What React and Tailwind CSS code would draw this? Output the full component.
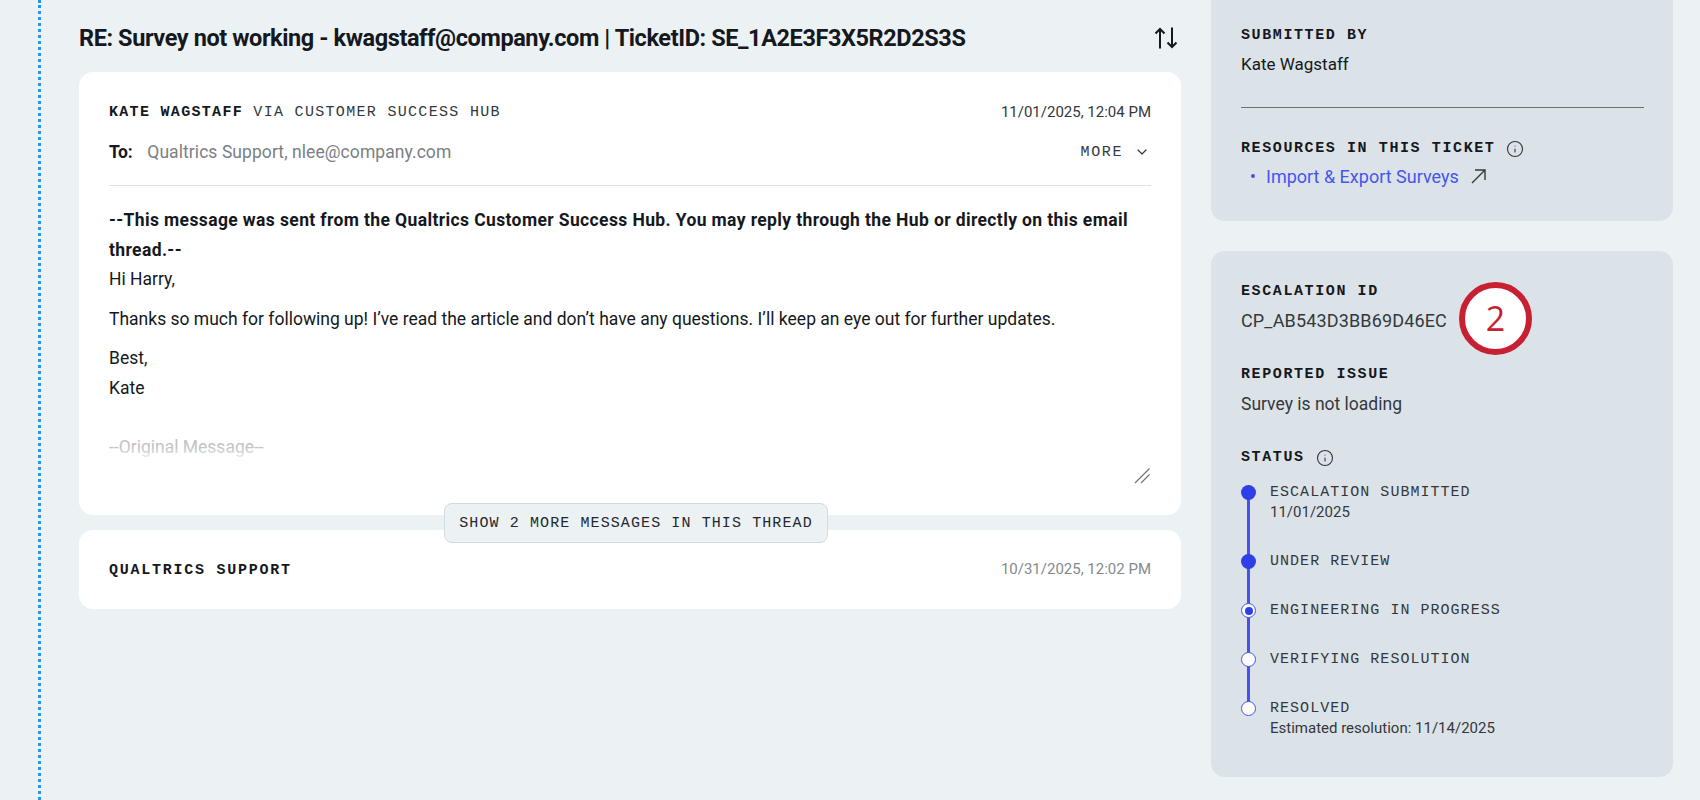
import React from "react";
import { ChevronDown, Info } from "lucide-react";

const SANS = "font-['Roboto','Liberation_Sans',sans-serif]";
const MONO = "font-['Liberation_Mono','DejaVu_Sans_Mono',monospace]";
const LABEL = `${MONO} pt-[1px] text-[15px] leading-[20px] font-bold tracking-[1.6px] text-[#15181c]`;

const STEPS = [
  { label: "ESCALATION SUBMITTED", sub: "11/01/2025", state: "done", h: "h-[69px]" },
  { label: "UNDER REVIEW", state: "done", h: "h-[49px]" },
  { label: "ENGINEERING IN PROGRESS", state: "active", h: "h-[49px]" },
  { label: "VERIFYING RESOLUTION", state: "todo", h: "h-[49px]" },
  { label: "RESOLVED", sub: "Estimated resolution: 11/14/2025", state: "todo", last: true, h: "h-[46px]" },
];

function Dot({ state }) {
  if (state === "done") {
    return <span className="relative z-10 mt-[2px] block w-[15px] h-[15px] shrink-0 rounded-full bg-[#2f3fe8]" />;
  }
  return (
    <span className="relative z-10 mt-[2px] flex items-center justify-center w-[15px] h-[15px] shrink-0 rounded-full bg-white border-[1.5px] border-[#4553ee]">
      {state === "active" && <span className="block w-[8px] h-[8px] rounded-full bg-[#2f3fe8]" />}
    </span>
  );
}

function UpDownIcon() {
  return (
    <svg width="24" height="22" viewBox="0 0 24 22" fill="none" stroke="#15181c" strokeWidth="2">
      <path d="M6 21.5V2M1.5 6.5L6 2l4.5 4.5" />
      <path d="M18 .5V20M13.5 15.5L18 20l4.5-4.5" />
    </svg>
  );
}

function ExternalIcon() {
  return (
    <svg width="15" height="15" viewBox="0 0 15 15" fill="none" stroke="#33383d" strokeWidth="1.4" className="ml-[12px]">
      <path d="M1 14L14 1M4 1h10v10" />
    </svg>
  );
}

function ResizeHandle() {
  return (
    <svg width="16" height="16" viewBox="0 0 16 16" fill="none" stroke="#6f7478" strokeWidth="1.2">
      <path d="M1 15L15.5 .5M7 15l8.5-8.5" />
    </svg>
  );
}

export default function App() {
  return (
    <div className={`h-[800px] overflow-hidden bg-[#ecf1f4] pl-[38px] flex ${SANS}`}>
      <div className="border-l-[3px] border-dotted border-[#2196f3] h-full pl-[38px] flex">
        {/* thread column */}
        <main className="w-[1102px] pt-[23px]">
          <div className="h-[32px] flex items-center justify-between mb-[17px] pr-[3px]">
            <h1 className="text-[23.5px] font-bold text-[#15181c] tracking-[-0.41px]">
              RE: Survey not working - kwagstaff@company.com | TicketID: SE_1A2E3F3X5R2D2S3S
            </h1>
            <div className="mb-[2px]">
              <UpDownIcon />
            </div>
          </div>

          <div className="relative">
            <section className="h-[443px] bg-white rounded-[14px] px-[30px] pt-[30px] flex flex-col">
              <div className="flex items-center justify-between h-[20px]">
                <p className={`${MONO} pt-[3px] text-[15px] tracking-[1.31px] text-[#33383d]`}>
                  <span className="font-bold text-[#15181c]">KATE WAGSTAFF</span> VIA CUSTOMER SUCCESS HUB
                </p>
                <span className="text-[15px] text-[#33383d]">11/01/2025, 12:04 PM</span>
              </div>
              <div className="flex items-center justify-between h-[20px] mt-[20px]">
                <p className="text-[17.5px] tracking-[0.07px] text-[#7b8085]">
                  <span className="font-bold text-[#15181c] mr-[15px] tracking-[-0.3px]">To:</span>
                  Qualtrics Support, nlee@company.com
                </p>
                <div className="flex items-center gap-[11px] pr-[1px]">
                  <span className={`${MONO} pt-[2px] text-[15px] tracking-[1.6px] text-[#33383d]`}>MORE</span>
                  <ChevronDown size={16} strokeWidth={1.8} className="text-[#33383d]" />
                </div>
              </div>
              <div className="border-t border-[#dce3e8] mt-[23px]" />

              <div className="relative flex-1 pt-[20px] text-[17.5px] leading-[29.5px] text-[#15181c]">
                <p className="font-bold tracking-[0.38px]">
                  --This message was sent from the Qualtrics Customer Success Hub. You may reply through the Hub or directly on this email thread.--
                </p>
                <p className="mb-[10px]">Hi Harry,</p>
                <p className="mb-[10px]">
                  Thanks so much for following up! I’ve read the article and don’t have any questions. I’ll keep an eye out for further updates.
                </p>
                <p>Best,</p>
                <p className="mb-[30px]">Kate</p>
                <div className="relative">
                  <p className="text-[#bfc3c6]">--Original Message--</p>
                  <div className="absolute inset-x-0 bottom-0 h-[16px] bg-gradient-to-b from-transparent to-white" />
                </div>
                <div className="absolute right-[1px] bottom-[31px]">
                  <ResizeHandle />
                </div>
              </div>
            </section>

            <section className="mt-[15px] h-[79px] bg-white rounded-[14px] px-[30px] flex items-center justify-between">
              <p className={`${MONO} pt-[3px] text-[15px] font-bold tracking-[1.75px] text-[#15181c]`}>QUALTRICS SUPPORT</p>
              <span className="text-[15px] text-[#85898d]">10/31/2025, 12:02 PM</span>
            </section>

            <button className={`absolute left-[365px] top-[431px] w-[384px] h-[40px] pt-[2px] rounded-[8px] bg-[#ecf1f4] border border-[#cfdbe3] ${MONO} text-[15px] tracking-[1.1px] text-[#24282c]`}>
              SHOW 2 MORE MESSAGES IN THIS THREAD
            </button>
          </div>
        </main>

        {/* details column */}
        <aside className="w-[462px] ml-[30px] flex flex-col gap-[30px] text-[17.5px] text-[#15181c]">
          <div className="-mt-[20px] h-[241px] bg-[#dce3e8] rounded-[14px] pt-[45px] px-[30px]">
            <h3 className={LABEL}>SUBMITTED BY</h3>
            <p className="leading-[20px] mt-[8px] text-[17px]">Kate Wagstaff</p>
            <div className="border-t border-[#6d7175] mt-[33px] mr-[-1px]" />
            <div className="flex items-center gap-[11px] mt-[30px]">
              <h3 className={LABEL}>RESOURCES IN THIS TICKET</h3>
              <Info size={18} strokeWidth={1.5} className="text-[#33383d]" />
            </div>
            <div className="flex items-center mt-[7px] h-[20px] pl-[10px]">
              <span className="block w-[4px] h-[4px] rounded-full bg-[#3f51ee] mr-[11px]" />
              <span className="text-[18px] text-[#4456ee]">Import &amp; Export Surveys</span>
              <ExternalIcon />
            </div>
          </div>

          <div className="h-[526px] bg-[#dce3e8] rounded-[14px] pt-[30px] px-[30px]">
            <div className="relative">
              <h3 className={LABEL}>ESCALATION ID</h3>
              <p className="leading-[20px] mt-[9px] text-[18px] tracking-[0.15px] text-[#33383d]">CP_AB543D3BB69D46EC</p>
              <div className="absolute left-[218px] top-[1px] w-[73px] h-[73px] rounded-full bg-white border-[6px] border-[#c62032] flex items-center justify-center text-[#c62032] text-[34px] font-medium font-['Open_Sans',sans-serif]">
                2
              </div>
            </div>
            <h3 className={`${LABEL} mt-[33px]`}>REPORTED ISSUE</h3>
            <p className="leading-[20px] mt-[9px] text-[#33383d]">Survey is not loading</p>
            <div className="flex items-center gap-[11px] mt-[33px]">
              <h3 className={LABEL}>STATUS</h3>
              <Info size={18} strokeWidth={1.5} className="text-[#33383d]" />
            </div>

            <ul className="mt-[15px]">
              {STEPS.map((step) => (
                <li key={step.label} className={`relative flex gap-[14px] ${step.h}`}>
                  <Dot state={step.state} />
                  {!step.last && (
                    <span className="absolute left-[6.25px] top-[10px] w-[2.5px] h-full bg-[#4553ee]" />
                  )}
                  <div>
                    <p className={`${MONO} text-[15px] leading-[20px] tracking-[1.03px] text-[#33383d]`}>{step.label}</p>
                    {step.sub && <p className="text-[15px] leading-[18px] text-[#33383d]">{step.sub}</p>}
                  </div>
                </li>
              ))}
            </ul>
          </div>
        </aside>
      </div>
    </div>
  );
}
